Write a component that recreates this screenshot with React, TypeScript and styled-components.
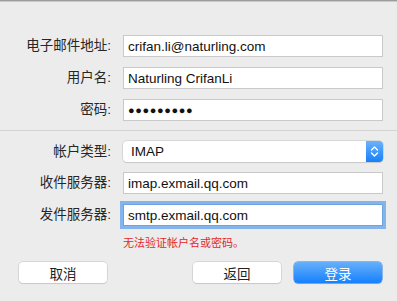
import React from 'react';
import styled, { createGlobalStyle } from 'styled-components';

const Global = createGlobalStyle`
    html, body {
        margin: 0;
        padding: 0;
        background: #ececec;
    }
    body {
        font-family: "Liberation Sans", "Noto Sans CJK SC", sans-serif;
        color: #222;
        -webkit-font-smoothing: antialiased;
    }
`;

const Window = styled.div`
    width: 397px;
    height: 301px;
    background: #ececec;
    border-top: 1px solid #9c9c9c;
    box-shadow: inset 0 1px 0 #c9c9c9;
    box-sizing: border-box;
    display: flex;
    flex-direction: column;
`;

const Section = styled.div<{ top: number }>`
    display: grid;
    grid-template-columns: 111px 260px;
    column-gap: 12px;
    row-gap: 10px;
    align-items: center;
    padding-top: ${(p) => p.top}px;
`;

const Label = styled.div`
    font-size: 13.5px;
    line-height: 16px;
    text-align: right;
    white-space: nowrap;
    color: #262626;
`;

const Field = styled.div<{ focused?: boolean }>`
    height: 22px;
    box-sizing: border-box;
    background: #fff;
    border: 1px solid #c9c9c9;
    border-top-color: #bdbdbd;
    padding: 0 4px;
    display: flex;
    align-items: center;
    font-size: 13.5px;
    color: #111;
    white-space: nowrap;
    overflow: hidden;
    box-shadow: ${(p) => (p.focused ? '0 0 0 3px #84b4ec' : 'none')};
    border-color: ${(p) => (p.focused ? '#6fa2e0' : '#c9c9c9')};
`;

const Dots = styled.span`
    font-size: 11px;
    letter-spacing: 0.6px;
    color: #111;
`;

const Divider = styled.div`
    height: 1px;
    background: #d3d3d3;
    margin-top: 9px;
`;

const Select = styled.div`
    height: 21px;
    box-sizing: border-box;
    background: #fff;
    border-radius: 4px;
    box-shadow: 0 0 0 0.5px #c2c2c2, 0 1px 1px rgba(0, 0, 0, 0.12);
    display: flex;
    align-items: center;
    font-size: 13.5px;
    color: #111;
    padding-left: 8px;
    overflow: hidden;
`;

const SelectText = styled.span`
    flex: 1;
`;

const Stepper = styled.div`
    width: 17px;
    height: 100%;
    background: linear-gradient(#6cb2fb, #1580fd);
    display: flex;
    align-items: center;
    justify-content: center;
`;

const ErrorText = styled.div`
    grid-column: 2;
    font-size: 11px;
    line-height: 13px;
    color: #e3262b;
    margin-top: 1px;
`;

const Buttons = styled.div`
    display: flex;
    align-items: center;
    padding: 12px 15px 0 19px;
`;

const Button = styled.div<{ primary?: boolean }>`
    width: 88px;
    height: 21px;
    box-sizing: border-box;
    border-radius: 4px;
    display: flex;
    align-items: center;
    justify-content: center;
    font-size: 13.5px;
    color: ${(p) => (p.primary ? '#fff' : '#222')};
    background: ${(p) => (p.primary ? 'linear-gradient(#68b0fa, #1481fd)' : '#fff')};
    box-shadow: ${(p) =>
        p.primary
            ? '0 0 0 0.5px #2f7ee8, 0 1px 1px rgba(0, 0, 0, 0.15)'
            : '0 0 0 0.5px #c2c2c2, 0 1px 1px rgba(0, 0, 0, 0.12)'};
`;

const Spacer = styled.div`
    flex: 1;
`;

const Gap = styled.div`
    width: 13px;
`;

const Chevrons = () => (
    <svg width="9" height="13" viewBox="0 0 9 13" fill="none">
        <path d="M1.5 5 L4.5 2 L7.5 5" stroke="#fff" strokeWidth="1.4" strokeLinecap="round" strokeLinejoin="round" />
        <path d="M1.5 8 L4.5 11 L7.5 8" stroke="#fff" strokeWidth="1.4" strokeLinecap="round" strokeLinejoin="round" />
    </svg>
);

const App: React.FC = () => {
    return (
        <Window>
            <Global />
            <Section top={34}>
                <Label>电子邮件地址:</Label>
                <Field>crifan.li@naturling.com</Field>
                <Label>用户名:</Label>
                <Field>Naturling CrifanLi</Field>
                <Label>密码:</Label>
                <Field>
                    <Dots>●●●●●●●●●</Dots>
                </Field>
            </Section>
            <Divider />
            <Section top={10}>
                <Label>帐户类型:</Label>
                <Select>
                    <SelectText>IMAP</SelectText>
                    <Stepper>
                        <Chevrons />
                    </Stepper>
                </Select>
                <Label>收件服务器:</Label>
                <Field>imap.exmail.qq.com</Field>
                <Label>发件服务器:</Label>
                <Field focused>smtp.exmail.qq.com</Field>
                <ErrorText>无法验证帐户名或密码。</ErrorText>
            </Section>
            <Buttons>
                <Button>取消</Button>
                <Spacer />
                <Button>返回</Button>
                <Gap />
                <Button primary>登录</Button>
            </Buttons>
        </Window>
    );
};

export default App;
